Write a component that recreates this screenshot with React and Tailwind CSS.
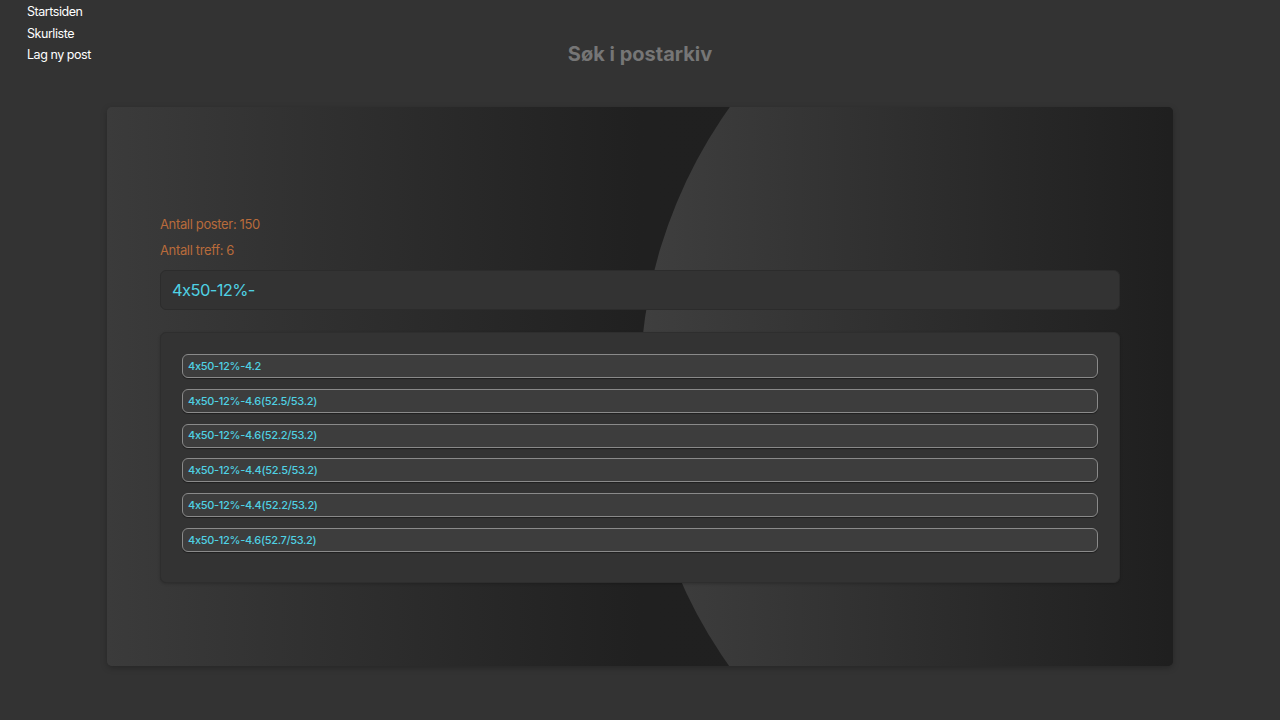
import React from "react";

const links = ["Startsiden", "Skurliste", "Lag ny post"];

const results = [
  "4x50-12%-4.2",
  "4x50-12%-4.6(52.5/53.2)",
  "4x50-12%-4.6(52.2/53.2)",
  "4x50-12%-4.4(52.5/53.2)",
  "4x50-12%-4.4(52.2/53.2)",
  "4x50-12%-4.6(52.7/53.2)",
];

export default function App() {
  return (
    <div className="min-h-screen bg-[#333333] font-['Inter',sans-serif] relative">
      {/* Nav links */}
      <nav className="absolute left-[27px] top-[1px] flex flex-col text-[12.5px] leading-[21.5px] text-white">
        {links.map((l) => (
          <a key={l} href="#" className="tracking-[-0.45px]">
            {l}
          </a>
        ))}
      </nav>

      <div className="pt-[41px] flex flex-col items-center">
        <h1 className="text-[20px] font-bold text-[#767676] leading-[26px]">
          Søk i postarkiv
        </h1>

        {/* Main card */}
        <div className="relative mt-[40px] w-[1066px] h-[559px] rounded-[5px] overflow-hidden bg-gradient-to-r from-[#3b3b3b] via-[#202020] via-50% to-[#1f1f1f] shadow-[0_2px_6px_rgba(0,0,0,0.25)]">
          {/* decorative circle */}
          <div className="absolute left-[533px] top-[-201px] w-[962px] h-[962px] rounded-full bg-gradient-to-r from-[#3f3f3f] via-[#303030] via-25% to-[#1f1f1f] to-55%" />

          <div className="relative px-[53px] pt-[109px]">
            <p className="text-[13px] leading-[16px] text-[#b86b3b] tracking-[-0.35px]">Antall poster: 150</p>
            <p className="mt-[10px] text-[13px] leading-[16px] text-[#b86b3b] tracking-[-0.35px]">Antall treff: 6</p>

            <div className="mt-[12px] h-[40px] rounded-[6px] bg-[#333333] border border-[#2c2c2c] flex items-center px-[11px]">
              <span className="text-[16.5px] text-[#4fd1e3] tracking-[-0.6px]">4x50-12%-</span>
            </div>

            <div className="mt-[22px] rounded-[6px] bg-[#333333] border border-[#2e2e2e] px-[21px] pt-[21px] pb-[30px] flex flex-col gap-[10.8px] shadow-[0_1px_3px_rgba(0,0,0,0.2)]">
              {results.map((r, i) => (
                <div
                  key={i}
                  className="h-[24px] rounded-[6px] border border-[#8a8a8a] bg-[#3d3d3d] flex items-center px-[5px] shadow-[0_1px_1px_rgba(0,0,0,0.4)]"
                >
                  <span className="text-[11px] font-medium text-[#4fd1e3] tracking-[-0.3px]">{r}</span>
                </div>
              ))}
            </div>
          </div>
        </div>
      </div>
    </div>
  );
}
